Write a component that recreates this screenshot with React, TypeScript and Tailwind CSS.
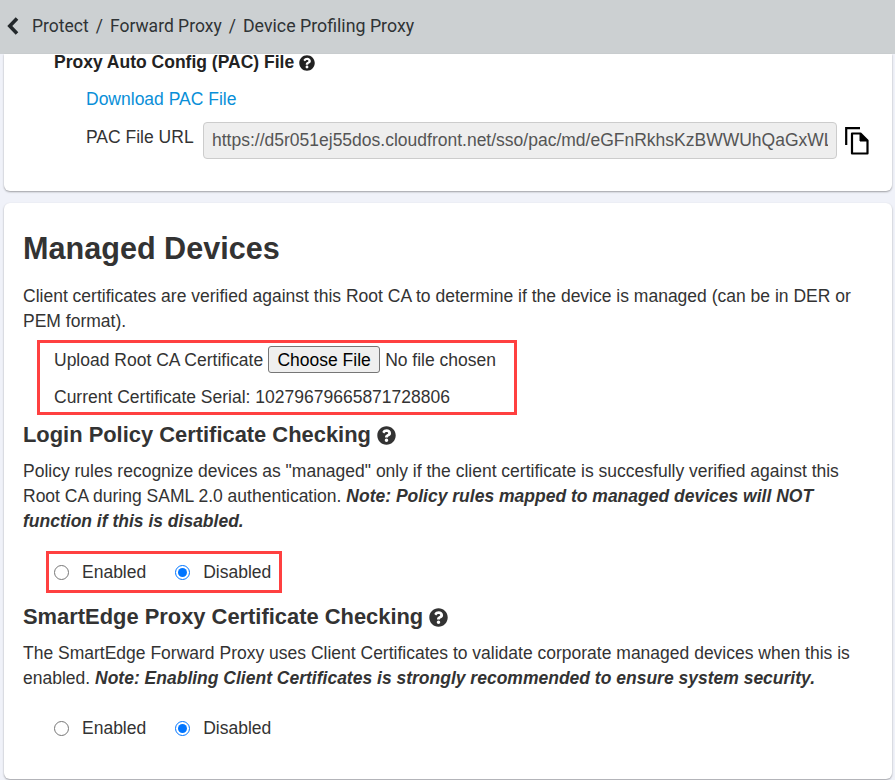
const HelpIcon = ({ size }: { size: number }) => (
  <svg viewBox="0 0 512 512" width={size} height={size} fill="currentColor" className="inline-block shrink-0">
    <path d="M504 256c0 136.997-111.043 248-248 248S8 392.997 8 256C8 119.083 119.043 8 256 8s248 111.083 248 248zM262.655 90c-54.497 0-89.255 22.957-116.549 63.758-3.536 5.286-2.353 12.415 2.715 16.258l34.699 26.31c5.205 3.947 12.621 3.008 16.665-2.122 17.864-22.658 30.113-35.797 57.303-35.797 20.429 0 45.698 13.148 45.698 32.958 0 14.976-12.363 22.667-32.534 33.976C247.128 238.528 216 254.941 216 296v4c0 6.627 5.373 12 12 12h56c6.627 0 12-5.373 12-12v-1.333c0-28.462 83.186-29.647 83.186-106.667 0-58.002-60.165-102-116.531-102zM256 338c-25.365 0-46 20.635-46 46 0 25.364 20.635 46 46 46s46-20.636 46-46c0-25.365-20.635-46-46-46z" />
  </svg>
);

const CopyIcon = () => (
  <svg viewBox="0 0 24 28" width="24" height="28" fill="none" stroke="#000" strokeWidth="2.2">
    <path d="M1.2 18V1.2H15" />
    <path d="M7 6.5h8.5l7 7V26.5H7z" strokeLinejoin="round" />
    <path d="M15 6.5v7.5h7.5z" fill="#000" strokeWidth="1" />
  </svg>
);

const RadioPair = ({ name }: { name: string }) => (
  <div className="flex items-center gap-[29px]">
    <label className="flex items-center gap-[13px]">
      <input type="radio" name={name} className="w-[15px] h-[15px] m-0 accent-[#0075ff]" />
      Enabled
    </label>
    <label className="flex items-center gap-[13px]">
      <input type="radio" name={name} defaultChecked className="w-[15px] h-[15px] m-0 accent-[#0075ff]" />
      Disabled
    </label>
  </div>
);

export default function App() {
  return (
    <div className="h-[780px] overflow-hidden bg-[#f0f2f9] font-['Liberation_Sans',Arial,sans-serif] text-[17.5px] text-[#333]">
      {/* Breadcrumb */}
      <div className="h-[54px] bg-[#ccd0d2] flex items-center pl-[7px] pb-[2px] font-['Roboto',sans-serif] text-[17.5px] text-[#2f3335]">
        <svg viewBox="0 0 12 18" width="12" height="18" fill="none" stroke="#23282b" strokeWidth="3.6" className="mr-[13px]">
          <path d="M10 1.5L2.8 9l7.2 7.5" />
        </svg>
        <span>Protect</span>
        <span className="mx-[7px]">/</span>
        <span>Forward Proxy</span>
        <span className="mx-[7px]">/</span>
        <span className="text-[17.8px]">Device Profiling Proxy</span>
      </div>

      <div className="pl-[4px] pr-[3px]">
        {/* PAC file card */}
        <div className="h-[137px] bg-white rounded-b-[6px] shadow-[0_1px_2px_rgba(0,0,0,0.35)] pl-[50px] pr-[21px] pt-[1px]">
          <div className="flex items-center gap-[5px] h-[16px] font-bold text-[#222] leading-none">
            Proxy Auto Config (PAC) File <HelpIcon size={16} />
          </div>
          <div className="pl-[32px]">
            <a href="#" className="block mt-[19px] text-[#0a8fd8] leading-[18px]">Download PAC File</a>
            <div className="flex items-start mt-[14px]">
              <span className="mt-[2px] w-[117px] shrink-0">PAC File URL</span>
              <input
                readOnly
                value="https://d5r051ej55dos.cloudfront.net/sso/pac/md/eGFnRkhsKzBWWUhQaGxWLzVjT0Z3PT0"
                className="w-[634px] h-[37px] px-[8px] border border-[#ccc] rounded-[4px] bg-[#eee] text-[#555] outline-none"
              />
              <span className="ml-[8px] mt-[5px]"><CopyIcon /></span>
            </div>
          </div>
        </div>

        {/* Managed devices card */}
        <div className="mt-[12px] h-[576px] bg-white rounded-[6px] shadow-[0_1px_2px_rgba(0,0,0,0.35)] px-[19px] pt-[27px]">
          <h1 className="text-[30.6px] font-bold leading-[36px] text-[#333]">Managed Devices</h1>
          <p className="mt-[18px] leading-[25px]">
            Client certificates are verified against this Root CA to determine if the device is managed (can be in DER or PEM format).
          </p>
          <div className="mt-[6px] ml-[14px] w-[480px] h-[75px] border-[3px] border-[#ff4040] pl-[14px] pt-[2px]">
            <div className="flex items-center h-[30px]">
              <span className="mr-[5px] whitespace-nowrap">Upload Root CA Certificate</span>
              <input
                type="file"
                className="text-[#333] file:h-[27px] file:w-[112px] file:border file:border-[#767676] file:rounded-[3px] file:bg-[#efefef] file:text-black file:mr-[5px]"
              />
            </div>
            <div className="mt-[10px] leading-[25px]">Current Certificate Serial: 10279679665871728806</div>
          </div>

          <h2 className="mt-[6px] flex items-center gap-[6px] text-[21.9px] font-bold leading-[28px]">
            Login Policy Certificate Checking <HelpIcon size={19} />
          </h2>
          <p className="mt-[10px] leading-[25px]">
            Policy rules recognize devices as "managed" only if the client certificate is succesfully verified against this Root CA during SAML 2.0 authentication.{" "}
            <b><i>Note: Policy rules mapped to managed devices will NOT function if this is disabled.</i></b>
          </p>
          <div className="mt-[17px] ml-[23px] w-[236px] h-[42px] border-[3px] border-[#ff4040] pl-[5px] flex items-center">
            <RadioPair name="login" />
          </div>

          <h2 className="mt-[10px] flex items-center gap-[6px] text-[21.9px] font-bold leading-[28px]">
            SmartEdge Proxy Certificate Checking <HelpIcon size={19} />
          </h2>
          <p className="mt-[10px] leading-[25px]">
            The SmartEdge Forward Proxy uses Client Certificates to validate corporate managed devices when this is enabled.{" "}
            <b><i>Note: Enabling Client Certificates is strongly recommended to ensure system security.</i></b>
          </p>
          <div className="mt-[25px] ml-[31px] leading-[25px]">
            <RadioPair name="edge" />
          </div>
        </div>
      </div>
    </div>
  );
}
